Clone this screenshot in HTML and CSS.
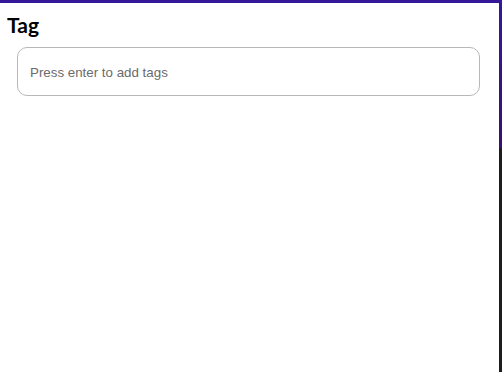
FILE: index.html
```html
<!DOCTYPE html>
<html lang="en">
<head>
    <meta charset="UTF-8">
    <meta name="viewport" content="width=device-width, initial-scale=1.0">
    <title>Tag</title>
    <link rel="stylesheet" href="styles.css">
</head>
<body>
    <div class="panel">
        <h1 class="panel-title">Tag</h1>
        <div class="tag-box">
            <input type="text" class="tag-input" placeholder="Press enter to add tags">
        </div>
    </div>
</body>
</html>
```

FILE: styles.css
```css
* {
    box-sizing: border-box;
    margin: 0;
    padding: 0;
}

html, body {
    height: 100%;
}

body {
    background: linear-gradient(to bottom, #35189a 0, #3a0f6e 148px, #1d1d1f 148px, #1d1d1f 100%);
    padding-top: 3px;
    overflow: hidden;
}

.panel {
    background: white;
    width: 499px;
    height: 369px;
    padding: 9px 7px;
}

.panel-title {
    font-family: Lato, 'Open Sans', sans-serif;
    font-size: 21px;
    font-weight: 700;
    color: #000;
    line-height: 26px;
    margin-bottom: 9px;
}

.tag-box {
    margin-left: 10px;
    width: 463px;
    height: 49px;
    border: 1px solid #b8b8b8;
    border-radius: 10px;
    display: flex;
    align-items: center;
    padding: 0 12px;
}

.tag-input {
    width: 100%;
    border: none;
    outline: none;
    background: transparent;
    font-family: 'Liberation Sans', Arial, sans-serif;
    font-size: 13.333px;
    color: #333;
    margin-top: 2px;
}

.tag-input::placeholder {
    color: #6b6b6b;
}
```
